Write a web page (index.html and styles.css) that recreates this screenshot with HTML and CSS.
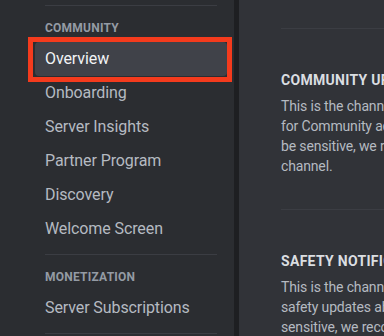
FILE: index.html
```html
<!DOCTYPE html>
<html lang="en">
<head>
  <meta charset="UTF-8" />
  <meta name="viewport" content="width=device-width, initial-scale=1.0" />
  <title>Server Settings - Community</title>
  <link rel="stylesheet" href="styles.css">
</head>
<body>
  <!-- Settings sidebar -->
  <nav class="sidebar">
    <div class="sep sep-top"></div>
    <div class="header">Community</div>
    <div class="item selected">Overview</div>
    <div class="item">Onboarding</div>
    <div class="item">Server Insights</div>
    <div class="item">Partner Program</div>
    <div class="item">Discovery</div>
    <div class="item">Welcome Screen</div>
    <div class="sep"></div>
    <div class="header">Monetization</div>
    <div class="item">Server Subscriptions</div>
    <div class="sep"></div>
  </nav>
  <div class="scrollbar"></div>

  <!-- Overview content -->
  <main class="content">
    <section class="row">
      <h5 class="row-title">Community Updates Channel</h5>
      <p class="row-desc">
        <span>This is the channel where we send messages relevant</span>
        <span>for Community admins and moderators. Some info may</span>
        <span>be sensitive, we recommend choosing a private moderator-only</span>
        <span>channel.</span>
      </p>
    </section>
    <section class="row">
      <h5 class="row-title">Safety Notifications Channel</h5>
      <p class="row-desc">
        <span>This is the channel where we'll send you important</span>
        <span>safety updates about your server. Since these can be</span>
        <span>sensitive, we recommend using a private channel.</span>
      </p>
    </section>
  </main>
</body>
</html>
```

FILE: styles.css
```css
body {
  margin: 0;
  padding: 0;
  height: 336px;
  overflow: hidden;
  display: flex;
  background-color: #313338;
  font-family: Roboto, "Liberation Sans", sans-serif;
}
/* Sidebar */
.sidebar {
  flex: 0 0 auto;
  width: 192px;
  padding: 0 7px 0 35px;
  background: #2b2d31;
}
.sep {
  height: 1px;
  margin: 8px 10px;
  background: #3b3d43;
}
.sep-top {
  margin-top: 5px;
}
.header {
  padding: 6px 10px;
  font-size: 12px;
  line-height: 16px;
  font-weight: 700;
  letter-spacing: 0.02em;
  text-transform: uppercase;
  color: #949ba4;
}
.item {
  padding: 7px 10px;
  font-size: 16px;
  line-height: 20px;
  letter-spacing: -0.1px;
  color: #b5bac1;
  border-radius: 4px;
  white-space: nowrap;
}
.item.selected {
  position: relative;
  background: #404249;
  color: #f2f3f5;
}
/* Kotak merah penanda */
.item.selected::after {
  content: "";
  position: absolute;
  top: -5px;
  left: -7px;
  right: -5px;
  bottom: -6px;
  border: 5px solid #f43b1d;
}
.scrollbar {
  flex: 0 0 5px;
  background: #1e1f22;
}
/* Konten utama */
.content {
  flex: 1;
  min-width: 0;
  padding-left: 42px;
  padding-top: 28px;
  overflow: hidden;
}
.row {
  border-top: 1px solid #3b3d43;
  padding: 41px 0 33px;
}
.row-title {
  margin: 0 0 6px;
  font-size: 14px;
  line-height: 20px;
  font-weight: 700;
  letter-spacing: 0.3px;
  text-transform: uppercase;
  color: #dbdee1;
  white-space: nowrap;
}
.row-desc {
  margin: 0;
  font-size: 14px;
  line-height: 20px;
  letter-spacing: -0.15px;
  color: #b5bac1;
}
.row-desc span {
  display: block;
  white-space: nowrap;
}
```
